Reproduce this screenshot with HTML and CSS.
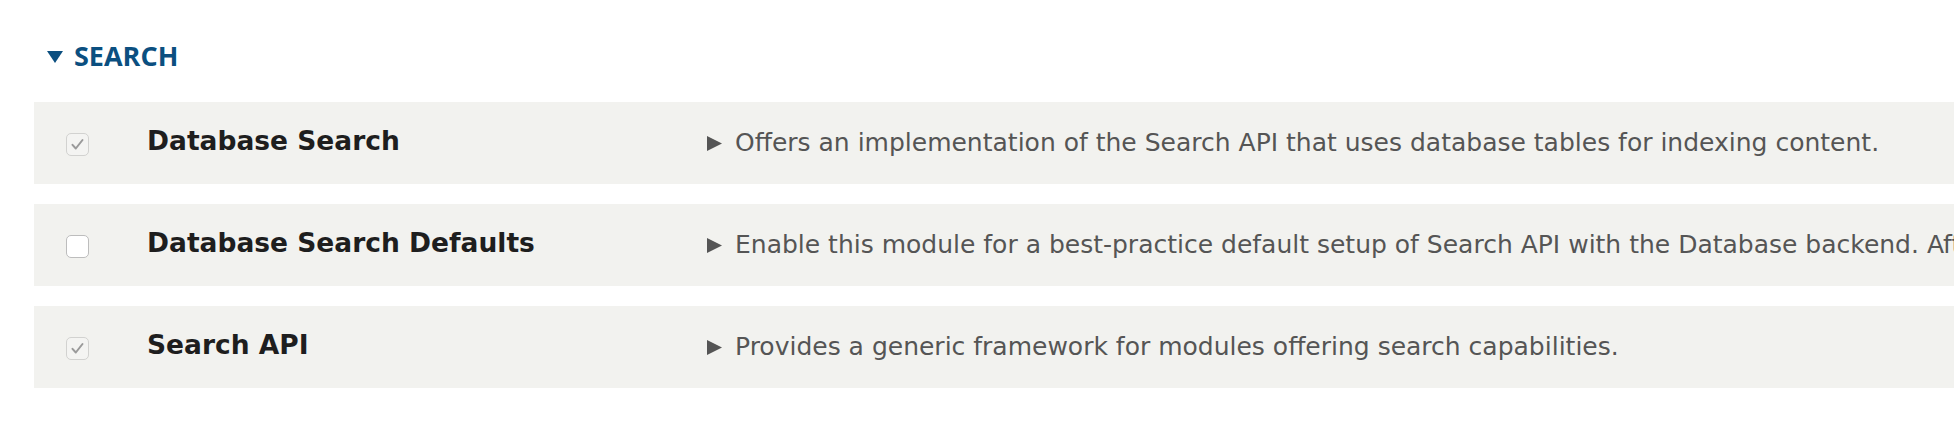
FILE: index.html
```html
<!DOCTYPE html>
<html>
<head>
<meta charset="utf-8">
<link rel="stylesheet" href="styles.css">
</head>
<body>
<div class="page">
  <div class="group-title">
    <svg class="caret-down" width="16" height="12" viewBox="0 0 16 12"><polygon points="0,0 16,0 8,12" fill="#0b4f80"/></svg>
    <span>SEARCH</span>
  </div>
  <div class="modules">
    <div class="module">
      <div class="cell-check"><span class="checkbox checked disabled"><svg width="15" height="15" viewBox="0 0 15 15"><path d="M2.5 7.8 L5.8 11.5 L12.5 3" fill="none" stroke="#9a9a9a" stroke-width="2" stroke-linecap="round" stroke-linejoin="round"/></svg></span></div>
      <div class="cell-name">Database Search</div>
      <div class="cell-desc"><svg class="caret-right" width="15" height="15" viewBox="0 0 15 15"><polygon points="0,0 15,7.5 0,15" fill="#555"/></svg><span class="desc-text">Offers an implementation of the Search API that uses database tables for indexing content.</span></div>
    </div>
    <div class="module">
      <div class="cell-check"><span class="checkbox"></span></div>
      <div class="cell-name">Database Search Defaults</div>
      <div class="cell-desc"><svg class="caret-right" width="15" height="15" viewBox="0 0 15 15"><polygon points="0,0 15,7.5 0,15" fill="#555"/></svg><span class="desc-text">Enable this module for a best-practice default setup of Search API with the Database backend. After installation, you can disable it again.</span></div>
    </div>
    <div class="module">
      <div class="cell-check"><span class="checkbox checked disabled"><svg width="15" height="15" viewBox="0 0 15 15"><path d="M2.5 7.8 L5.8 11.5 L12.5 3" fill="none" stroke="#9a9a9a" stroke-width="2" stroke-linecap="round" stroke-linejoin="round"/></svg></span></div>
      <div class="cell-name">Search API</div>
      <div class="cell-desc"><svg class="caret-right" width="15" height="15" viewBox="0 0 15 15"><polygon points="0,0 15,7.5 0,15" fill="#555"/></svg><span class="desc-text">Provides a generic framework for modules offering search capabilities.</span></div>
    </div>
  </div>
</div>
</body>
</html>
```
FILE: styles.css
```css
html, body {
  margin: 0;
  padding: 0;
  background: #fff;
  overflow: hidden;
}
.page {
  font-family: "Open Sans", "Liberation Sans", sans-serif;
  padding: 38px 0 0 34px;
}
.group-title {
  display: flex;
  align-items: center;
  gap: 11px;
  padding-left: 13px;
  height: 36px;
  color: #0b4f80;
  font-weight: 700;
  font-size: 27px;
  line-height: 36px;
  margin-bottom: 28px;
}
.caret-down {
  flex: none;
  margin-top: 2px;
}
.modules {
  display: flex;
  flex-direction: column;
  gap: 20px;
}
.module {
  display: grid;
  grid-template-columns: 113px 560px 1fr;
  align-items: center;
  height: 82px;
  background: #f2f2ef;
  overflow: hidden;
}
.cell-check {
  padding-left: 32px;
  display: flex;
  align-items: center;
  padding-top: 3px;
}
.checkbox {
  box-sizing: border-box;
  width: 23px;
  height: 23px;
  border: 1px solid #bdbdbd;
  border-radius: 5px;
  background: #fff;
  display: flex;
  align-items: center;
  justify-content: center;
}
.checkbox.disabled {
  border-color: #d2d2d0;
  background: #f4f4f2;
}
.cell-name {
  font-family: "DejaVu Sans", "Open Sans", sans-serif;
  font-weight: 700;
  font-size: 26.5px;
  color: #1e1e1e;
  white-space: nowrap;
  line-height: 40px;
  padding-bottom: 4px;
}
.cell-desc {
  font-family: "DejaVu Sans", "Open Sans", sans-serif;
  display: flex;
  align-items: center;
  gap: 13px;
  white-space: nowrap;
  overflow: hidden;
  color: #555;
  font-size: 25px;
  line-height: 36px;
}
.caret-right {
  flex: none;
}
.desc-text {
  white-space: nowrap;
}
```
